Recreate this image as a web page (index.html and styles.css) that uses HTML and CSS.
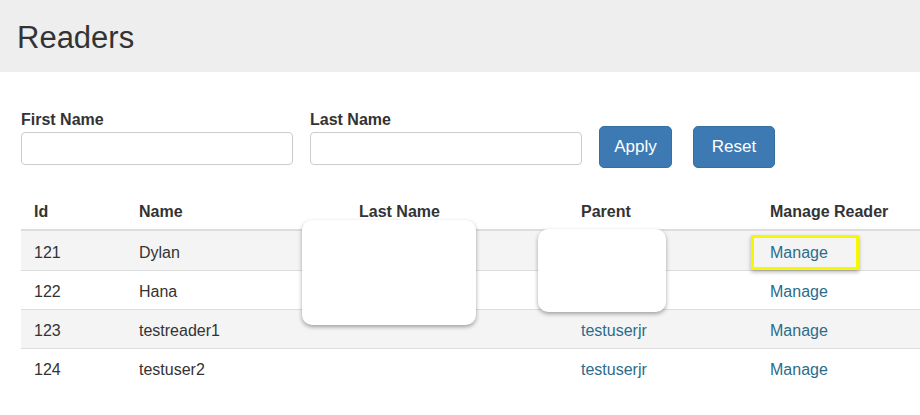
FILE: index.html
```html
<!DOCTYPE html>
<html>
<head>
<meta charset="utf-8">
<link rel="stylesheet" href="styles.css">
</head>
<body>
<div class="page">
  <header class="page-header">
    <h1 class="title">Readers</h1>
  </header>

  <form class="filters">
    <div class="field">
      <label class="field-label">First Name</label>
      <input class="field-input" type="text">
    </div>
    <div class="field">
      <label class="field-label">Last Name</label>
      <input class="field-input" type="text">
    </div>
    <div class="actions">
      <button type="button" class="btn btn-apply">Apply</button>
      <button type="button" class="btn btn-reset">Reset</button>
    </div>
  </form>

  <div class="table-wrap">
    <table class="readers">
      <thead>
        <tr>
          <th class="c-id">Id</th>
          <th class="c-name">Name</th>
          <th class="c-last">Last Name</th>
          <th class="c-parent">Parent</th>
          <th class="c-manage">Manage Reader</th>
        </tr>
      </thead>
      <tbody>
        <tr>
          <td>121</td>
          <td>Dylan</td>
          <td></td>
          <td></td>
          <td class="manage-cell"><span class="highlight"></span><a class="link" href="#">Manage</a></td>
        </tr>
        <tr>
          <td>122</td>
          <td>Hana</td>
          <td></td>
          <td></td>
          <td><a class="link" href="#">Manage</a></td>
        </tr>
        <tr>
          <td>123</td>
          <td>testreader1</td>
          <td></td>
          <td><a class="link" href="#">testuserjr</a></td>
          <td><a class="link" href="#">Manage</a></td>
        </tr>
        <tr>
          <td>124</td>
          <td>testuser2</td>
          <td></td>
          <td><a class="link" href="#">testuserjr</a></td>
          <td><a class="link" href="#">Manage</a></td>
        </tr>
      </tbody>
    </table>
    <div class="mask mask-last"></div>
    <div class="mask mask-parent"></div>
  </div>
</div>
</body>
</html>
```

FILE: styles.css
```css
html, body {
  margin: 0;
  padding: 0;
  background: #ffffff;
}

body {
  font-family: "Liberation Sans", Arial, Helvetica, sans-serif;
  color: #333333;
  font-size: 16px;
  line-height: 20px;
}

.page {
  width: 920px;
  height: 415px;
  overflow: hidden;
}

.page-header {
  box-sizing: border-box;
  height: 72px;
  background: #eeeeee;
  padding: 21px 0 0 17px;
}

.title {
  margin: 0;
  font-size: 31px;
  line-height: 34px;
  font-weight: normal;
  color: #333333;
}

.filters {
  display: flex;
  align-items: flex-start;
  gap: 17px;
  margin: 38px 0 0 21px;
}

.field {
  display: flex;
  flex-direction: column;
  width: 272px;
}

.field-label {
  font-weight: bold;
  font-size: 16px;
  line-height: 20px;
  color: #333333;
}

.field-input {
  box-sizing: border-box;
  margin-top: 2px;
  height: 33px;
  width: 100%;
  border: 1px solid #cccccc;
  border-radius: 4px;
  background: #ffffff;
  padding: 0 10px;
  font: inherit;
}

.actions {
  display: flex;
  gap: 21px;
  margin-top: 16px;
}

.btn {
  box-sizing: border-box;
  height: 42px;
  border: 1px solid #36709f;
  border-radius: 5px;
  background: #3d7ab3;
  color: #ffffff;
  font-family: "Liberation Sans", Arial, sans-serif;
  font-size: 17px;
  padding: 0;
}

.btn-apply {
  width: 73px;
}

.btn-reset {
  width: 82px;
}

.table-wrap {
  position: relative;
  margin: 22px 0 0 21px;
}

.readers {
  width: 960px;
  border-collapse: separate;
  border-spacing: 0;
  table-layout: fixed;
}

.readers th,
.readers td {
  text-align: left;
  padding: 11px 13px 7px;
  line-height: 20px;
  font-size: 16px;
  white-space: nowrap;
}

.readers th {
  padding-top: 12px;
  border-bottom: 2px solid #dddddd;
  font-weight: bold;
  color: #333333;
}

.readers td {
  border-top: 1px solid #dddddd;
  color: #333333;
}

.readers tbody tr:first-child td {
  border-top: 0;
  padding-top: 12px;
}

.readers tbody tr:nth-child(odd) td {
  background: #f4f4f4;
}

.c-id { width: 79px; }
.c-name { width: 194px; }
.c-last { width: 196px; }
.c-parent { width: 163px; }
.c-manage { width: 250px; }

.link {
  color: #2b6c8b;
  text-decoration: none;
}

.manage-cell {
  position: relative;
}

.highlight {
  position: absolute;
  left: -6px;
  top: 4px;
  width: 108px;
  height: 35px;
  box-sizing: border-box;
  border: 3px solid #f7f700;
  box-shadow: 0 2px 4px rgba(0, 0, 0, 0.3);
}

.mask {
  position: absolute;
  background: #ffffff;
  border-radius: 10px;
  box-shadow: 0 2px 4px rgba(0, 0, 0, 0.35);
}

.mask-last {
  left: 281px;
  top: 30px;
  width: 174px;
  height: 105px;
}

.mask-parent {
  left: 517px;
  top: 39px;
  width: 128px;
  height: 83px;
}
```
